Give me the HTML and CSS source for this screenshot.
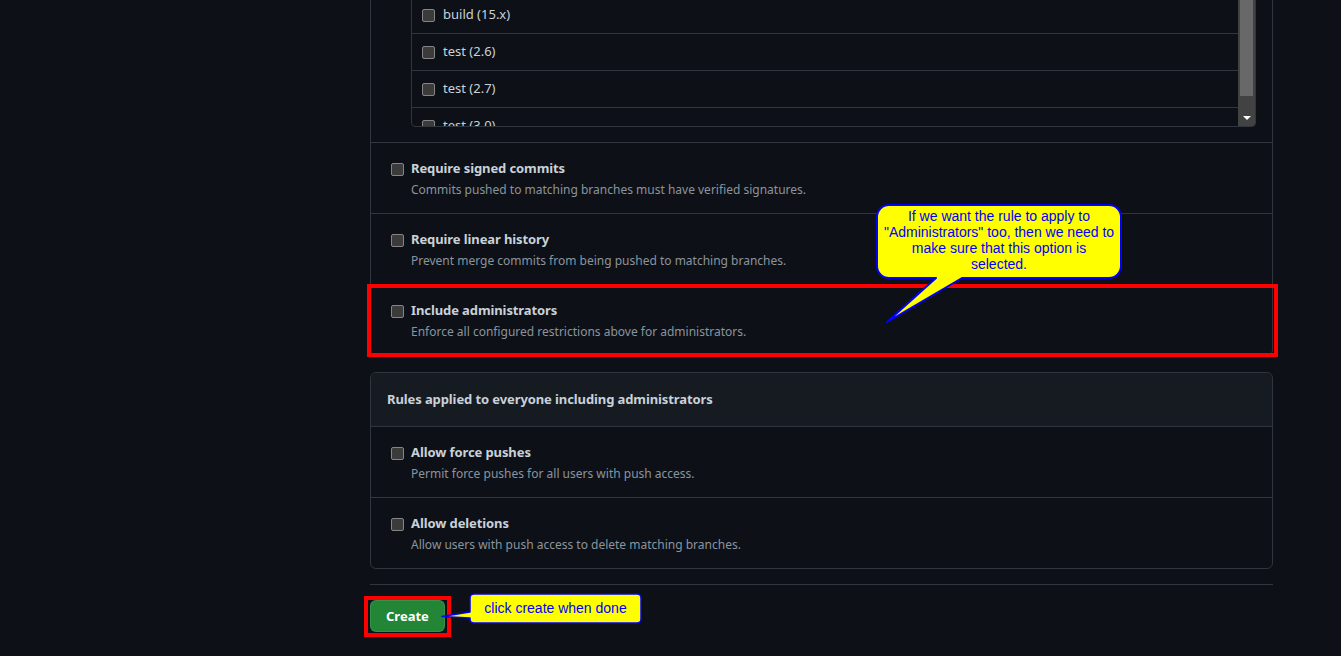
FILE: index.html
```html
<!DOCTYPE html>
<html lang="en">
<head>
<meta charset="utf-8">
<title>Branch protection rule</title>
<link rel="stylesheet" href="styles.css">
</head>
<body>
<div class="page">
  <div class="content">
    <div class="box">
      <div class="box-row row-checks">
        <div class="check-list">
          <div class="check-items">
            <label class="check-item"><input type="checkbox" class="cb"><span>build (12.x)</span></label>
            <label class="check-item"><input type="checkbox" class="cb"><span>build (14.x)</span></label>
            <label class="check-item"><input type="checkbox" class="cb"><span>build (15.x)</span></label>
            <label class="check-item"><input type="checkbox" class="cb"><span>test (2.6)</span></label>
            <label class="check-item"><input type="checkbox" class="cb"><span>test (2.7)</span></label>
            <label class="check-item"><input type="checkbox" class="cb"><span>test (3.0)</span></label>
          </div>
          <div class="scrollbar">
            <div class="sb-btn"></div>
            <div class="sb-thumb"></div>
            <div class="sb-track"></div>
            <div class="sb-btn sb-down"><span class="sb-arrow"></span></div>
          </div>
        </div>
      </div>
      <label class="box-row option">
        <input type="checkbox" class="cb">
        <span class="option-text">
          <span class="option-title">Require signed commits</span>
          <span class="option-desc">Commits pushed to matching branches must have verified signatures.</span>
        </span>
      </label>
      <label class="box-row option">
        <input type="checkbox" class="cb">
        <span class="option-text">
          <span class="option-title">Require linear history</span>
          <span class="option-desc">Prevent merge commits from being pushed to matching branches.</span>
        </span>
      </label>
      <label class="box-row option">
        <input type="checkbox" class="cb">
        <span class="option-text">
          <span class="option-title">Include administrators</span>
          <span class="option-desc">Enforce all configured restrictions above for administrators.</span>
        </span>
      </label>
    </div>

    <div class="box box-second">
      <div class="box-header">Rules applied to everyone including administrators</div>
      <label class="box-row option">
        <input type="checkbox" class="cb">
        <span class="option-text">
          <span class="option-title">Allow force pushes</span>
          <span class="option-desc">Permit force pushes for all users with push access.</span>
        </span>
      </label>
      <label class="box-row option">
        <input type="checkbox" class="cb">
        <span class="option-text">
          <span class="option-title">Allow deletions</span>
          <span class="option-desc">Allow users with push access to delete matching branches.</span>
        </span>
      </label>
    </div>

    <hr class="divider">
    <button class="btn-create" type="button">Create</button>
  </div>

  <div class="highlight highlight-admin"></div>
  <div class="highlight highlight-create"></div>

  <div class="callout callout-admin">
    <svg class="callout-shape" width="260" height="130" viewBox="0 0 260 130">
      <path d="M19,5 H239 A12,12 0 0 1 251,17 V66 A12,12 0 0 1 239,78 H92 L17,122 L66,78 H19 A12,12 0 0 1 7,66 V17 A12,12 0 0 1 19,5 Z" fill="#ffff00" stroke="#0000ff" stroke-width="2" stroke-linejoin="round"/>
    </svg>
    <div class="callout-text callout-admin-text">If we want the rule to apply to<br>"Administrators" too, then we need to<br>make sure that this option is<br>selected.</div>
  </div>

  <div class="callout callout-create">
    <svg class="callout-shape" width="205" height="36" viewBox="0 0 205 36">
      <path d="M34,4 H197 A4,4 0 0 1 201,8 V29 A4,4 0 0 1 197,33 H34 A4,4 0 0 1 30,29 V28 L2,26.5 L30,22 V8 A4,4 0 0 1 34,4 Z" fill="#ffff00" stroke="#0000ff" stroke-width="1.5" stroke-linejoin="round"/>
    </svg>
    <div class="callout-text callout-create-text">click create when done</div>
  </div>
</div>
</body>
</html>
```

FILE: styles.css
```css
html, body {
  margin: 0;
  padding: 0;
  background: #0d1117;
  overflow: hidden;
}

body {
  font-family: "Noto Sans", "Liberation Sans", sans-serif;
  color: #c9d1d9;
  font-size: 14px;
  line-height: 1.5;
}

.page {
  position: relative;
  width: 1341px;
  height: 656px;
  overflow: hidden;
}

.content {
  width: 903px;
  margin: -95px 0 0 370px;
}

.box {
  border: 1px solid #30363d;
  border-radius: 6px;
}

.box-second {
  margin-top: 16px;
}

.box-row {
  display: block;
  border-top: 1px solid #30363d;
}

.box-row:first-child {
  border-top: 0;
}

.row-checks {
  padding: 16px 16px 15px 16px;
}

.check-list {
  display: flex;
  margin-left: 24px;
  height: 205px;
  box-sizing: border-box;
  border: 1px solid #30363d;
  border-radius: 4px;
  overflow: hidden;
}

.check-items {
  flex: 1;
  display: flex;
  flex-direction: column;
}

.check-item {
  display: flex;
  align-items: center;
  gap: 8px;
  height: 36px;
  flex: none;
  padding-left: 10px;
  border-bottom: 1px solid #30363d;
  font-size: 13px;
  color: #c9d1d9;
}

.cb {
  appearance: none;
  -webkit-appearance: none;
  width: 13px;
  height: 13px;
  margin: 0;
  flex: none;
  box-sizing: border-box;
  background: #3b3b3b;
  border: 1px solid #858585;
  border-radius: 2px;
}

.scrollbar {
  width: 17px;
  flex: none;
  display: flex;
  flex-direction: column;
  background: #424242;
}

.sb-btn {
  height: 17px;
  flex: none;
  display: flex;
  align-items: center;
  justify-content: center;
}

.sb-thumb {
  height: 156px;
  flex: none;
  margin: 0 2px;
  background: #686868;
}

.sb-track {
  flex: 1;
}

.sb-arrow {
  width: 0;
  height: 0;
  border-left: 4px solid transparent;
  border-right: 4px solid transparent;
  border-top: 4px solid #ffffff;
}

.option {
  display: flex;
  align-items: flex-start;
  gap: 7px;
  padding: 15px 16px 14px 20px;
}

.option .cb {
  margin-top: 5px;
}

.option-text {
  display: flex;
  flex-direction: column;
}

.option-title {
  font-weight: 700;
  font-size: 13px;
  letter-spacing: -0.1px;
  line-height: 21px;
  color: #c9d1d9;
}

.option-desc {
  margin-top: 2px;
  font-size: 12px;
  line-height: 18px;
  color: #8b949e;
}

.box-header {
  padding: 16px;
  background: #161b22;
  border-bottom: 1px solid #30363d;
  border-radius: 6px 6px 0 0;
  font-weight: 700;
  font-size: 13px;
  letter-spacing: -0.1px;
  line-height: 21px;
  color: #c9d1d9;
}

.box-header + .box-row {
  border-top: 0;
}

.divider {
  margin: 15px 0 0 0;
  height: 0;
  border: 0;
  border-top: 1px solid #30363d;
}

.btn-create {
  display: block;
  margin-top: 15px;
  height: 32px;
  padding: 0 15px;
  box-sizing: border-box;
  background: #238636;
  border: 1px solid rgba(240, 246, 252, 0.1);
  border-radius: 6px;
  color: #ffffff;
  font-family: "Noto Sans", "Liberation Sans", sans-serif;
  font-weight: 700;
  font-size: 13px;
  line-height: 20px;
}

.highlight {
  position: absolute;
  border: 4px solid #ff0000;
  box-sizing: border-box;
}

.highlight-admin {
  left: 367px;
  top: 284px;
  width: 911px;
  height: 73px;
}

.highlight-create {
  left: 364px;
  top: 596px;
  width: 87px;
  height: 41px;
}

.callout {
  position: absolute;
}

.callout-shape {
  display: block;
}

.callout-text {
  position: absolute;
  font-family: "Liberation Sans", Arial, sans-serif;
  color: #0000ff;
  text-align: center;
  white-space: nowrap;
}

.callout-admin {
  left: 870px;
  top: 200px;
  width: 260px;
  height: 130px;
}

.callout-admin-text {
  left: 7px;
  top: 8px;
  width: 244px;
  font-size: 14px;
  line-height: 16px;
}

.callout-create {
  left: 440px;
  top: 590px;
  width: 205px;
  height: 36px;
}

.callout-create-text {
  left: 30px;
  top: 9px;
  width: 171px;
  font-size: 14px;
  line-height: 18px;
}
```
